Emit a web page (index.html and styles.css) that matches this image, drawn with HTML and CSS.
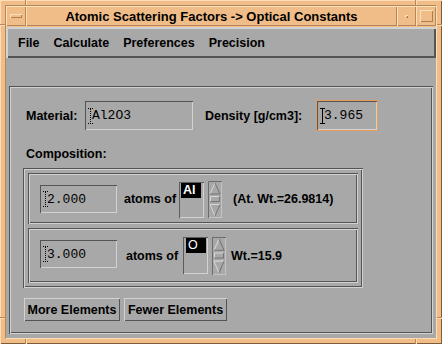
FILE: index.html
```html
<!DOCTYPE html>
<html>
<head>
<meta charset="utf-8">
<link rel="stylesheet" href="styles.css">
</head>
<body>
<div class="window">
  <span class="notch nv nt n-l"></span>
  <span class="notch nv nt n-r"></span>
  <span class="notch nv nb n-l"></span>
  <span class="notch nv nb n-r"></span>
  <span class="notch nh nlft n-t"></span>
  <span class="notch nh nlft n-b"></span>
  <span class="notch nh nrgt n-t"></span>
  <span class="notch nh nrgt n-b"></span>
  <div class="frame">
    <div class="titlebar">
      <div class="tb tb-menu"><span class="g-menu"></span></div>
      <div class="tb tb-title">Atomic Scattering Factors -&gt; Optical Constants</div>
      <div class="tb tb-min"><span class="g-min"></span></div>
      <div class="tb tb-max"><span class="g-max"></span></div>
    </div>
    <div class="client">
      <div class="menubar">
        <span class="menu-item">File</span>
        <span class="menu-item">Calculate</span>
        <span class="menu-item">Preferences</span>
        <span class="menu-item">Precision</span>
      </div>
      <div class="main">
        <div class="groove outer">
          <div class="material-row">
            <span class="lbl lbl-material">Material:</span>
            <div class="field f-material">
              <div class="field-in">
                <svg class="ibeam" width="5" height="16" viewBox="0 0 5 16"><path d="M0 0.5H5M0 15.5H5M2.5 1V15" stroke="#000" stroke-width="1" stroke-dasharray="1 1" fill="none"/></svg><span>Al2O3</span>
              </div>
            </div>
            <span class="lbl lbl-density">Density [g/cm3]:</span>
            <div class="field focused f-density">
              <div class="field-in">
                <svg class="ibeam" width="5" height="16" viewBox="0 0 5 16"><path d="M0 0.5H5M0 15.5H5M2.5 1V15" stroke="#000" stroke-width="1" fill="none"/></svg><span>3.965</span>
              </div>
            </div>
          </div>
          <div class="lbl comp-label">Composition:</div>
          <div class="groove group">
            <div class="groove row row1">
              <div class="field f-atoms">
                <div class="field-in">
                  <svg class="ibeam" width="5" height="16" viewBox="0 0 5 16"><path d="M0 0.5H5M0 15.5H5M2.5 1V15" stroke="#000" stroke-width="1" stroke-dasharray="1 1" fill="none"/></svg><span>2.000</span>
                </div>
              </div>
              <span class="lbl atoms-of">atoms of</span>
              <div class="list"><span class="sel sel-bold">Al</span></div>
              <svg class="spin" width="14" height="37" viewBox="0 0 14 37">
                <path d="M0.5 37V0.5H14" stroke="#6c6c6c" fill="none"/>
                <path d="M13.5 1V36.5H1" stroke="#c4c4c4" fill="none"/>
                <path d="M2 13L7 2" stroke="#d6d6d6" fill="none"/>
                <path d="M7 2L12 13H2" stroke="#747474" fill="none"/>
                <path d="M2.5 20V15.5H11.5" stroke="#d6d6d6" fill="none"/>
                <path d="M11.5 15.5V20.5H2.5" stroke="#747474" fill="none"/>
                <path d="M12 23.5H2L7 35" stroke="#d6d6d6" fill="none"/>
                <path d="M12 23.5L7 35" stroke="#747474" fill="none"/>
              </svg>
              <span class="lbl wt wt1">(At. Wt.=26.9814)</span>
            </div>
            <div class="groove row row2">
              <div class="field f-atoms">
                <div class="field-in">
                  <svg class="ibeam" width="5" height="16" viewBox="0 0 5 16"><path d="M0 0.5H5M0 15.5H5M2.5 1V15" stroke="#000" stroke-width="1" stroke-dasharray="1 1" fill="none"/></svg><span>3.000</span>
                </div>
              </div>
              <span class="lbl atoms-of atoms-of2">atoms of</span>
              <div class="list list2"><span class="sel">O</span></div>
              <svg class="spin spin2" width="14" height="38" viewBox="0 0 14 37" preserveAspectRatio="none">
                <path d="M0.5 37V0.5H14" stroke="#6c6c6c" fill="none"/>
                <path d="M13.5 1V36.5H1" stroke="#c4c4c4" fill="none"/>
                <path d="M2 13L7 2" stroke="#d6d6d6" fill="none"/>
                <path d="M7 2L12 13H2" stroke="#747474" fill="none"/>
                <path d="M2.5 20V15.5H11.5" stroke="#d6d6d6" fill="none"/>
                <path d="M11.5 15.5V20.5H2.5" stroke="#747474" fill="none"/>
                <path d="M12 23.5H2L7 35" stroke="#d6d6d6" fill="none"/>
                <path d="M12 23.5L7 35" stroke="#747474" fill="none"/>
              </svg>
              <span class="lbl wt wt2">Wt.=15.9</span>
            </div>
          </div>
          <div class="buttons">
            <div class="btn btn-more">More Elements</div>
            <div class="btn btn-fewer">Fewer Elements</div>
          </div>
        </div>
      </div>
    </div>
  </div>
</div>
</body>
</html>
```

FILE: styles.css
```css
* { box-sizing: border-box; }
html, body { margin: 0; padding: 0; }
body {
  width: 442px;
  height: 344px;
  overflow: hidden;
  background: #a8a8a8;
  font-family: "Liberation Sans", Arial, sans-serif;
  color: #000;
}

/* ---------- window manager frame ---------- */
.window {
  position: relative;
  width: 442px;
  height: 344px;
  padding: 5px;
  background: #f0bc87;
  box-shadow: inset 1px 1px #fddcb6, inset -1px -1px #7e5c38;
}
.frame {
  height: 100%;
  display: flex;
  flex-direction: column;
  border: 1px solid;
  border-color: #b3875a #fddcb6 #fddcb6 #b3875a;
}
.notch { position: absolute; }
.nv { width: 2px; height: 5px; border-left: 1px solid #b3875a; border-right: 1px solid #fddcb6; }
.nt { top: 0; }
.nb { bottom: 0; }
.nv.n-l { left: 25px; }
.nv.n-r { left: 415px; }
.nh { height: 2px; width: 5px; border-top: 1px solid #b3875a; border-bottom: 1px solid #fddcb6; }
.nlft { left: 0; }
.nrgt { right: 0; }
.nh.n-t { top: 24px; }
.nh.n-b { top: 317px; }

.titlebar {
  flex: none;
  height: 20px;
  display: flex;
}
.tb {
  display: flex;
  align-items: center;
  justify-content: center;
  box-shadow: inset 1px 1px #fde0bc, inset -1px -1px #b3875a;
}
.tb-menu { width: 20px; }
.tb-title {
  width: 371px;
  font-size: 13px;
  font-weight: bold;
  white-space: nowrap;
}
.tb-min { width: 19px; }
.tb-max { width: 20px; }
.g-menu {
  width: 12px;
  height: 4px;
  box-shadow: inset 1px 1px #fde0bc, inset -1px -1px #a97e52;
}
.g-min {
  width: 3px;
  height: 3px;
  box-shadow: inset 1px 1px #fde0bc, inset -1px -1px #a97e52;
}
.g-max {
  width: 13px;
  height: 12px;
  box-shadow: inset 1px 1px #fde0bc, inset -1px -1px #a97e52;
}

/* ---------- client ---------- */
.client {
  flex: 1;
  margin-top: 1px;
  display: flex;
  flex-direction: column;
  background: #a8a8a8;
}
.menubar {
  flex: none;
  height: 31px;
  display: flex;
  align-items: center;
  padding-left: 5px;
  box-shadow: inset 2px 2px #d2d2d2, inset -2px -2px #545454;
}
.menu-item {
  padding: 0 7px;
  font-size: 12.5px;
  font-weight: bold;
}
.main {
  flex: 1;
  padding: 28px 3px 4px 3px;
  display: flex;
  flex-direction: column;
}
.groove {
  box-shadow: inset 1px 1px #545454, inset -1px -1px #d2d2d2,
              inset 2px 2px #d2d2d2, inset -2px -2px #545454;
}
.outer {
  flex: 1;
  padding: 2px;
  display: flex;
  flex-direction: column;
}
.lbl {
  font-size: 12.5px;
  font-weight: bold;
  white-space: nowrap;
  line-height: 14px;
}

/* material row */
.material-row {
  margin-top: 12px;
  padding-left: 15px;
  height: 31px;
  display: flex;
  align-items: center;
}
.lbl-material { width: 58px; }
.lbl-density { width: 111px; margin-left: 11px; }
.field {
  border: 1px solid transparent;
  height: 31px;
}
.field.focused { border-color: #e89c58; }
.f-material { width: 110px; }
.f-density { width: 62px; }
.field-in {
  height: 100%;
  display: flex;
  align-items: center;
  padding-left: 3px;
  box-shadow: inset 1px 1px #545454, inset -1px -1px #d2d2d2;
  font-family: "Liberation Mono", "Courier New", monospace;
  font-size: 13px;
}
.ibeam { flex: none; margin-right: -1px; }

/* composition */
.comp-label {
  margin: 16px 0 0 15px;
  height: 14px;
}
.group {
  margin: 7px 0 0 12px;
  width: 340px;
  height: 120px;
  padding: 5px;
  display: flex;
  flex-direction: column;
  gap: 4px;
}
.row {
  display: flex;
  align-items: flex-start;
  padding: 2px 2px 2px 11px;
}
.row1 { height: 51px; }
.row2 { height: 55px; }
.f-atoms { width: 79px; height: 30px; margin-top: 9px; }
.atoms-of { align-self: center; margin-left: 6px; width: 55px; }
.atoms-of2 { margin-left: 8px; width: 57px; }
.list {
  width: 25px;
  height: 36px;
  margin-top: 7px;
  padding: 1px 1px 0 2px;
  box-shadow: inset 1px 1px #5c5c5c, inset -1px -1px #d2d2d2;
}
.list2 { height: 37px; padding: 1px 1px 0 3px; margin-top: 7px; }
.sel {
  display: block;
  width: 20px;
  height: 15px;
  background: #000;
  color: #fff;
  font-size: 12.5px;
  line-height: 14px;
  padding-left: 2px;
}
.sel-bold { font-weight: bold; }
.spin { flex: none; margin: 6px 0 0 4px; }
.spin2 { margin-top: 7px; }
.wt { align-self: center; }
.wt1 { margin-left: 11px; }
.wt2 { margin-left: 5px; }

/* buttons */
.buttons {
  margin: 10px 0 0 13px;
  display: flex;
  gap: 4px;
}
.btn {
  height: 23px;
  display: flex;
  align-items: center;
  justify-content: center;
  font-size: 12.5px;
  font-weight: bold;
  white-space: nowrap;
  box-shadow: inset 1px 1px #d2d2d2, inset -1px -1px #545454;
}
.btn-more { width: 96px; }
.btn-fewer { width: 103px; }
```
